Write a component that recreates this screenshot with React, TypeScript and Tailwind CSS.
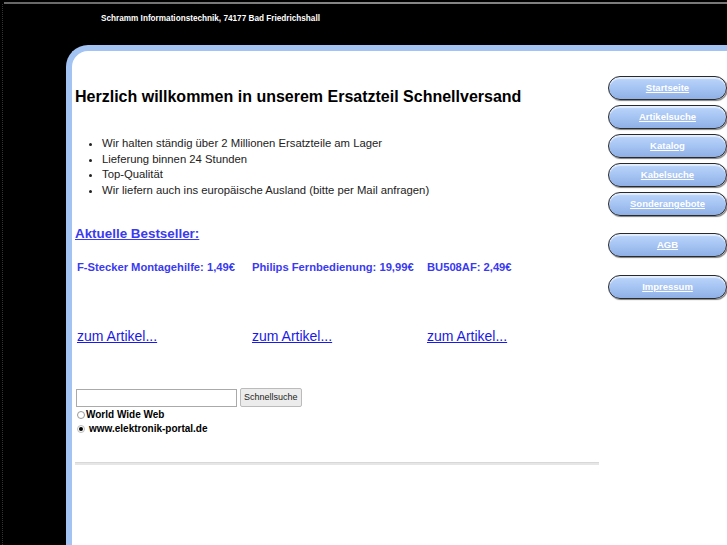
import React from "react";

const navTop = ["Startseite", "Artikelsuche", "Katalog", "Kabelsuche", "Sonderangebote"];

function NavButton({ label }: { label: string }) {
  return (
    <a
      href="#"
      className="relative flex h-[24px] w-[119px] items-center justify-center rounded-full border border-[#2a2a2a] bg-gradient-to-b from-[#bcd6fb] via-[#a6c4f3] to-[#8fb0e6] text-[9.5px] font-bold text-white underline shadow-[inset_0_2px_1px_rgba(255,255,255,0.6),1px_1px_1px_rgba(0,0,0,0.5)]"
      style={{ fontFamily: '"Liberation Sans", Arial, sans-serif' }}
    >
      {label}
    </a>
  );
}

export default function App() {
  const products = [
    "F-Stecker Montagehilfe: 1,49€",
    "Philips Fernbedienung: 19,99€",
    "BU508AF: 2,49€",
  ];
  return (
    <div
      className="flex h-[545px] w-[727px] flex-col overflow-hidden bg-black"
      style={{ fontFamily: '"Liberation Sans", Arial, sans-serif' }}
    >
      <div className="mt-[2px] ml-[4px] h-[2px] shrink-0 bg-gradient-to-r from-[#666] via-[#888] to-[#777]" />
      <div className="ml-[2px] flex flex-1 flex-col border-l border-dotted border-[#333]">
        <div className="flex h-[41px] shrink-0">
          <div className="ml-[98px] mt-[8px] origin-left scale-x-[0.91] whitespace-nowrap text-[9px] font-bold text-white">
            Schramm Informationstechnik, 74177 Bad Friedrichshall
          </div>
        </div>
        <div className="ml-[63px] flex flex-1 rounded-tl-[22px] border-t-[6px] border-l-[6px] border-[#a3c3f3] bg-white">
          <div className="w-[533px] shrink-0 pl-[3px] pt-[36px]">
            <h1 className="text-[16px] font-bold leading-[20px] text-black">
              Herzlich willkommen in unserem Ersatzteil Schnellversand
            </h1>
            <ul className="mt-[29px] list-disc pl-[27px] text-[11.3px] leading-[15.5px] text-[#222]">
              <li>Wir halten ständig über 2 Millionen Ersatzteile am Lager</li>
              <li>Lieferung binnen 24 Stunden</li>
              <li>Top-Qualität</li>
              <li>Wir liefern auch ins europäische Ausland (bitte per Mail anfragen)</li>
            </ul>
            <div className="mt-[27px] text-[13.4px] font-bold leading-[18px] text-[#3a3af0] underline">
              Aktuelle Bestseller:
            </div>
            <div className="mt-[17px] grid grid-cols-3 pl-[2px] pr-[3px]">
              {products.map((p) => (
                <div key={p} className="flex flex-col">
                  <div className="text-[11.2px] font-bold leading-[14px] text-[#3a3af0]">{p}</div>
                  <a href="#" className="mt-[53px] text-[14px] leading-[18px] text-[#1a1ae6] underline">
                    zum Artikel...
                  </a>
                </div>
              ))}
            </div>
            <div className="mt-[43px] flex items-center gap-[3px] pl-[1px]">
              <input type="text" className="h-[18px] w-[161px] border border-[#aaa] bg-white" />
              <button className="h-[19px] rounded-[2px] border border-[#bbb] bg-[#ececec] px-[3px] text-[9px] text-[#222]">
                Schnellsuche
              </button>
            </div>
            <div className="mt-[1px] flex items-center text-[10px] font-bold leading-[13px] text-black">
              <span className="ml-[2px] mr-[1px] inline-block h-[8px] w-[8px] rounded-full border border-[#999] bg-white" />
              World Wide Web
            </div>
            <div className="mt-[1px] flex items-center text-[10px] font-bold leading-[13px] text-black">
              <span className="ml-[2px] mr-[4px] flex h-[8px] w-[8px] items-center justify-center rounded-full border border-[#bbb] bg-white">
                <span className="h-[4px] w-[4px] rounded-full bg-black" />
              </span>
              www.elektronik-portal.de
            </div>
            <div className="mt-[27px] h-[3px] w-[524px] border-t border-[#d8d8d8] bg-[#e6e6e6]" />
          </div>
          <div className="flex flex-col pl-[3px] pt-[25px]">
            <div className="flex flex-col gap-[5px]">
              {navTop.map((l) => (
                <NavButton key={l} label={l} />
              ))}
            </div>
            <div className="mt-[17px]">
              <NavButton label="AGB" />
            </div>
            <div className="mt-[18px]">
              <NavButton label="Impressum" />
            </div>
          </div>
        </div>
      </div>
    </div>
  );
}
